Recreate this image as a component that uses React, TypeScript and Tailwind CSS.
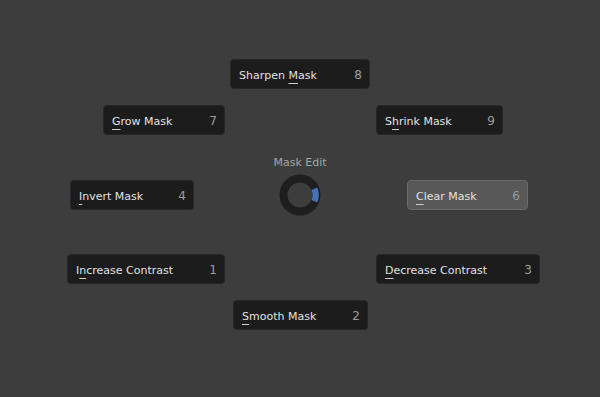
import React from "react";

type Item = {
  pre: string;
  u: string;
  post: string;
  num: string;
  left: number;
  top: number;
  width: number;
  active?: boolean;
};

const items: Item[] = [
  { pre: "Sharpen ", u: "M", post: "ask", num: "8", left: 230, top: 59, width: 140 },
  { pre: "", u: "G", post: "row Mask", num: "7", left: 103, top: 105, width: 122 },
  { pre: "S", u: "h", post: "rink Mask", num: "9", left: 376, top: 105, width: 127 },
  { pre: "", u: "I", post: "nvert Mask", num: "4", left: 70, top: 180, width: 124 },
  { pre: "", u: "C", post: "lear Mask", num: "6", left: 407, top: 180, width: 121, active: true },
  { pre: "I", u: "n", post: "crease Contrast", num: "1", left: 67, top: 254, width: 158 },
  { pre: "", u: "D", post: "ecrease Contrast", num: "3", left: 376, top: 254, width: 164 },
  { pre: "", u: "S", post: "mooth Mask", num: "2", left: 233, top: 300, width: 135 },
];

function PieItem({ it }: { it: Item }) {
  return (
    <div
      className={`absolute h-[30px] flex items-center justify-between pl-[8px] pr-[7px] pt-[2px] rounded-[4px] ${
        it.active ? "bg-[#585858] border border-[#6b6b6b]" : "bg-[#1c1c1c] border border-[#262626]"
      }`}
      style={{ left: it.left, top: it.top, width: it.width }}
    >
      <span className="text-[11px] text-[#e2e2e2] leading-none whitespace-nowrap">
        {it.pre}
        <span className="underline decoration-1 underline-offset-[4px] decoration-[#cfcfcf]">{it.u}</span>
        {it.post}
      </span>
      <span className="text-[12px] text-[#9c9c9c] leading-none">{it.num}</span>
    </div>
  );
}

export default function App() {
  return (
    <div
      className="relative w-[600px] h-[397px] bg-[#3d3d3d] overflow-hidden"
      style={{ fontFamily: '"DejaVu Sans", sans-serif' }}
    >
      <div className="absolute left-[240px] top-[157px] w-[120px] text-center text-[11px] text-[#a6a6a6] leading-none">
        Mask Edit
      </div>
      <svg className="absolute left-[278px] top-[173px]" width="44" height="44" viewBox="0 0 44 44">
        <circle cx="22" cy="22" r="16.5" fill="none" stroke="#1e1e1e" strokeWidth="8" />
        <path
          d="M 39.3 14.6 A 18.8 18.8 0 0 1 39.3 29.4 L 33.5 27.0 A 12.5 12.5 0 0 0 33.5 17.0 Z"
          fill="#4772b3"
        />
      </svg>
      {items.map((it, i) => (
        <PieItem key={i} it={it} />
      ))}
    </div>
  );
}
